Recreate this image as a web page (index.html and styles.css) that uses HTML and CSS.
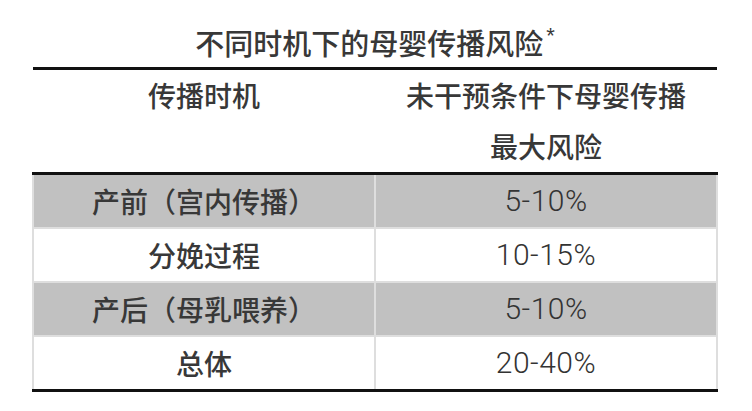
FILE: index.html
```html
<!DOCTYPE html>
<html lang="zh-CN">
<head>
<meta charset="utf-8">
<title>不同时机下的母婴传播风险</title>
<link rel="stylesheet" href="styles.css">
</head>
<body>
<div class="page">
  <h1 class="title">不同时机下的母婴传播风险<sup class="mark">*</sup></h1>
  <table class="risk">
    <thead>
      <tr>
        <th class="col-a">传播时机</th>
        <th class="col-b">未干预条件下母婴传播<br>最大风险</th>
      </tr>
    </thead>
    <tbody>
      <tr class="shade">
        <td>产前（宫内传播）</td>
        <td class="num">5-10%</td>
      </tr>
      <tr>
        <td>分娩过程</td>
        <td class="num">10-15%</td>
      </tr>
      <tr class="shade">
        <td>产后（母乳喂养）</td>
        <td class="num">5-10%</td>
      </tr>
      <tr>
        <td>总体</td>
        <td class="num">20-40%</td>
      </tr>
    </tbody>
  </table>
</div>
</body>
</html>
```

FILE: styles.css
```css
html, body {
  margin: 0;
  padding: 0;
  background: #ffffff;
}

body {
  font-family: "Noto Sans CJK SC", "Noto Sans", sans-serif;
  color: #353535;
}

.page {
  width: 752px;
  height: 411px;
  padding: 0 34px 0 32px;
  box-sizing: border-box;
  display: flex;
  flex-direction: column;
}

.title {
  margin: 0;
  padding-top: 22px;
  height: 45px;
  line-height: 40px;
  font-size: 29px;
  font-weight: 500;
  text-align: center;
  color: #383838;
}

.mark {
  font-family: "Liberation Sans", sans-serif;
  font-size: 22px;
  line-height: 0;
  vertical-align: 12px;
  margin-left: 3px;
}

.risk {
  width: 100%;
  border-collapse: collapse;
  border-top: 3px solid #111111;
  border-bottom: 3px solid #111111;
  font-size: 28px;
}

.risk th {
  font-weight: 500;
  line-height: 51px;
  padding: 0;
  vertical-align: top;
  text-align: center;
  color: #383838;
}

.risk thead tr {
  border-bottom: 3px solid #111111;
}

.risk th.col-a {
  width: 50%;
}

.risk td {
  height: 52px;
  padding: 0;
  line-height: 52px;
  text-align: center;
  border: 2px solid #dedede;
  font-weight: 500;
  color: #383838;
}

.risk tbody tr:first-child td {
  border-top: none;
}

.risk tbody tr:last-child td {
  border-bottom: none;
}

.risk tr.shade td {
  background: #c1c1c1;
}

.risk td.num {
  font-family: Roboto, "Liberation Sans", sans-serif;
  font-weight: 300;
  font-size: 30px;
  color: #333333;
  letter-spacing: 0.5px;
}
```
